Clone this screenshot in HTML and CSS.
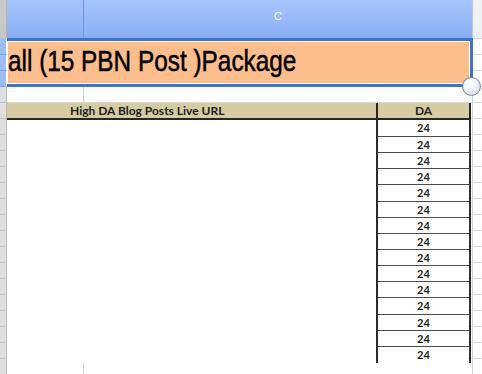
FILE: index.html
```html
<!DOCTYPE html>
<html lang="en">
<head>
    <meta charset="UTF-8" />
    <title>PBN Post Package</title>
    <link rel="stylesheet" href="styles.css">
</head>
<body>
<div class="sheet">
    <div class="corner"></div>
    <div class="colhead">
        <div class="col col-b"></div>
        <div class="col col-c">C</div>
        <div class="col col-d"></div>
    </div>

    <div class="rowheads">
        <div class="rh sel first"></div>
        <div class="rh sel"></div>
        <div class="rh sel"></div>
        <div class="rh"></div><div class="rh"></div><div class="rh"></div>
        <div class="rh"></div><div class="rh"></div><div class="rh"></div>
        <div class="rh"></div><div class="rh"></div><div class="rh"></div>
        <div class="rh"></div><div class="rh"></div><div class="rh"></div>
        <div class="rh"></div><div class="rh"></div><div class="rh"></div>
        <div class="rh"></div><div class="rh"></div><div class="rh"></div>
    </div>

    <div class="cells">
        <div class="banner">
            <div class="banner-fill"><span>all (15 PBN Post )Package</span></div>
        </div>
        <span class="handle"></span>

        <div class="blank-row"></div>

        <div class="links">
            <div class="th url">High DA Blog Posts Live URL</div>
            <div class="th da">DA</div>
            <div class="url-body"></div>
            <div class="da-list">
                <div class="da-cell first">24</div>
                <div class="da-cell">24</div>
                <div class="da-cell">24</div>
                <div class="da-cell">24</div>
                <div class="da-cell">24</div>
                <div class="da-cell">24</div>
                <div class="da-cell">24</div>
                <div class="da-cell">24</div>
                <div class="da-cell">24</div>
                <div class="da-cell">24</div>
                <div class="da-cell">24</div>
                <div class="da-cell">24</div>
                <div class="da-cell">24</div>
                <div class="da-cell">24</div>
                <div class="da-cell">24</div>
            </div>
        </div>
    </div>
</div>
</body>
</html>
```

FILE: styles.css
```css
* {
    box-sizing: border-box;
}
body {
    margin: 0;
    background-color: #fff;
    font-family: "Liberation Sans", Arial, sans-serif;
}
.sheet {
    display: grid;
    grid-template-columns: 7px 1fr;
    grid-template-rows: 38px 1fr;
    width: 482px;
    height: 374px;
    overflow: hidden;
}
.corner {
    background-color: #c9c9c9;
    border-right: 1px solid #b4b4b4;
}
.colhead {
    display: flex;
    background: linear-gradient(#a6c4fb, #8aaff3);
}
.col {
    height: 100%;
}
.col-b {
    width: 77px;
    border-right: 1px solid #6c95e2;
}
.col-c {
    width: 389px;
    padding-top: 10px;
    font-size: 11px;
    line-height: 12px;
    color: #fff;
    text-align: center;
    border-right: 1px solid #b9c6dc;
}
.col-d {
    flex: 1;
    background-color: #eef0f3;
}

.rowheads {
    display: flex;
    flex-direction: column;
}
.rh {
    height: 16px;
    flex-shrink: 0;
    background-color: #dfdfdf;
    border-bottom: 1px solid #c2c2c2;
    border-right: 1px solid #b8b8b8;
}
.rh.first {
    height: 17px;
}
.rh.sel {
    background-color: #9fbdf5;
    border-bottom-color: #7fa2e6;
    border-right-color: #fff;
}

.cells {
    position: relative;
    background:
        linear-gradient(#d4d4d4, #d4d4d4) 76px 0 / 1px 100% no-repeat,
        linear-gradient(#d4d4d4, #d4d4d4) 465px 0 / 1px 100% no-repeat,
        linear-gradient(transparent 15px, #d9d9d9 15px) 0 1px / 100% 16px repeat-y;
}
.banner {
    width: 466px;
    padding: 1px;
    background-color: #fff;
    border: 3px solid #3b74c9;
    border-left: none;
}
.banner-fill {
    height: 41px;
    overflow: hidden;
    background-color: #fdbe8e;
}
.banner-fill span {
    display: inline-block;
    font-size: 29px;
    line-height: 38px;
    color: #000;
    white-space: nowrap;
    -webkit-text-stroke: 0.5px #000;
    transform: scaleX(0.84);
    transform-origin: left center;
}
.handle {
    position: absolute;
    left: 455px;
    top: 39px;
    width: 19px;
    height: 19px;
    border-radius: 50%;
    border: 1px solid #7d8797;
    background: radial-gradient(circle at 40% 35%, #fff 0%, #eef1f5 45%, #c9d1dc 100%);
}
.blank-row {
    height: 16px;
}

.links {
    display: grid;
    grid-template-columns: 369px 95px;
    width: 464px;
    background-color: #fff;
    font-family: Lato, "Liberation Sans", sans-serif;
    font-weight: 700;
    color: #1e1e1e;
}
.th {
    height: 17px;
    font-size: 11px;
    line-height: 15px;
    background-color: #d5cca3;
    border-bottom: 2px solid #262626;
}
.th.url {
    padding-left: 63px;
    font-size: 12px;
}
.th.da {
    text-align: center;
    font-size: 12px;
    border-left: 2px solid #262626;
    border-right: 2px solid #262626;
}
.da-list {
    border-left: 2px solid #2c2c2c;
    border-right: 2px solid #2c2c2c;
}
.da-cell {
    height: 16.15px;
    font-size: 11px;
    line-height: 15px;
    text-align: center;
    border-bottom: 1px solid #4a4a4a;
}
.da-cell.first {
    height: 17px;
    line-height: 16px;
}
.da-cell:last-child {
    border-bottom: none;
}
```
